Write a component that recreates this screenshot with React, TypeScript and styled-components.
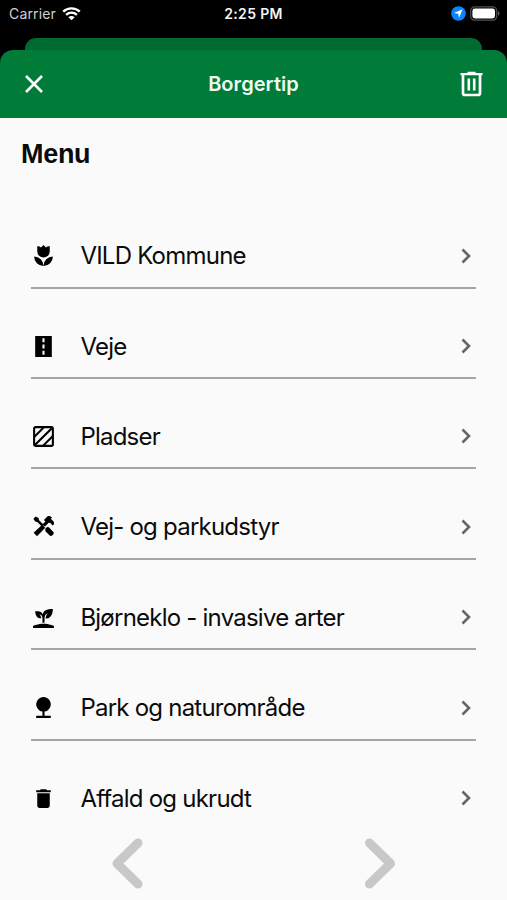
import React from "react";
import styled, { createGlobalStyle } from "styled-components";

const GlobalStyle = createGlobalStyle`
  * { box-sizing: border-box; }
  body { margin: 0; background: #000; font-family: Inter, "Liberation Sans", sans-serif; }
`;

const Screen = styled.div`
  width: 507px;
  height: 900px;
  overflow: hidden;
  display: flex;
  flex-direction: column;
  background: #000;
`;

const StatusBar = styled.div`
  flex: none;
  height: 38px;
  padding: 0 7px 11px 9px;
  display: grid;
  grid-template-columns: 1fr auto 1fr;
  align-items: center;
  color: #f4f4f4;
  font-size: 14px;
`;

const StatusGroup = styled.div<{ $end?: boolean }>`
  display: flex;
  align-items: center;
  justify-content: ${(p) => (p.$end ? "flex-end" : "flex-start")};
  gap: ${(p) => (p.$end ? 4 : 6)}px;
`;

const Carrier = styled.span`
  color: #d0d0d0;
  letter-spacing: 0.15px;
`;

const Clock = styled.span`
  margin-right: 2px;
  font-weight: 600;
  font-size: 14px;
  letter-spacing: 0.36px;
`;

const BackSheet = styled.div`
  flex: none;
  height: 12px;
  margin: 0 25px;
  border-radius: 11px 11px 0 0;
  background: #006b30;
`;

const Header = styled.header`
  flex: none;
  height: 68px;
  padding: 0 24px;
  display: grid;
  grid-template-columns: 1fr auto 1fr;
  align-items: center;
  border-radius: 13px 13px 0 0;
  background: #007b38;
  color: #fff;
`;

const IconButton = styled.button<{ $end?: boolean }>`
  display: flex;
  padding: 0;
  border: 0;
  background: none;
  color: inherit;
  justify-self: ${(p) => (p.$end ? "end" : "start")};
`;

const Title = styled.h1`
  margin: 0;
  font-size: 20px;
  font-weight: 600;
  line-height: 24px;
  letter-spacing: 0.05px;
  color: #eefaf2;
`;

const Content = styled.main`
  flex: 1;
  display: flex;
  flex-direction: column;
  background: #fafafa;
  color: #0b0b0b;
`;

const Heading = styled.h2`
  margin: 20px 0 0 21px;
  height: 32px;
  font-family: "Liberation Sans", sans-serif;
  font-size: 27px;
  line-height: 32px;
  font-weight: 700;
  letter-spacing: -0.3px;
`;

const List = styled.ul`
  list-style: none;
  margin: 28.3px 31px 0;
  padding: 0;
`;

const Row = styled.li`
  height: 90.4px;
  display: flex;
  align-items: flex-end;
  border-bottom: 2px solid #a5a5a5;
  &:last-child { border-bottom-color: transparent; }
`;

const RowInner = styled.div`
  flex: 1;
  height: 62px;
  display: flex;
  align-items: center;
`;

const Label = styled.span`
  flex: 1;
  margin-left: 24.4px;
  padding-top: 1px;
  font-size: 24px;
  line-height: 32px;
  letter-spacing: -0.77px;
  white-space: nowrap;
`;

const Pager = styled.nav`
  display: flex;
  justify-content: space-between;
  margin: 4.7px 110px 0;
`;

const Glyph = ({ children }: { children: React.ReactNode }) => (
  <svg width="25" height="25" viewBox="0 0 24 24" fill="#000">
    {children}
  </svg>
);

const rows = [
  {
    label: "VILD Kommune",
    icon: (
      <path d="M3 13a9 9 0 0 0 9 9 9 9 0 0 0-9-9m9 9a9 9 0 0 0 9-9 9 9 0 0 0-9 9m6-19v5a6 6 0 0 1-12 0V3c.74 0 1.47.12 2.16.39.55.23 1.04.57 1.45 1L12 2l2.39 2.39c.41-.43.9-.77 1.45-1C16.53 3.12 17.26 3 18 3Z" />
    ),
  },
  {
    label: "Veje",
    icon: <path d="M11 16h2v4h-2m0-10h2v4h-2m0-10h2v4h-2M4 22h16V2H4Z" />,
  },
  {
    label: "Pladser",
    icon: (
      <g fill="none" stroke="#000" strokeWidth="2">
        <rect x="3" y="3" width="18" height="18" rx="1.6" />
        <path d="M3 12.5 12.5 3M3.5 20.5l17-17M11.5 21l9.5-9.5" />
      </g>
    ),
  },
  {
    label: "Vej- og parkudstyr",
    icon: (
      <>
        <path d="m2.3 4.5 2.2-2.2 2.7 1.5.5 2.1 4.4 4.4-1.7 1.7L6 7.6l-2-.5ZM13.7 14.2l1.8-1.8 1.6.4 4.4 4.4c1.5 1.5-1.9 5-3.5 3.5l-4.2-4.2Z" />
        <path d="m2.5 18 8.3-7.8 2.9 2.9-7.9 8.2Z" />
        <path d="m10.6 10.3 3.2-3.2-1.4-1.4 3.8-3.8c1.5-.3 3 .4 4 1.4l-1.2 1.2 2.9 2.9.2 2.5-1.4 1.2-2.1-2.5-1.6-.1-3.6 3.6Z" />
      </>
    ),
  },
  {
    label: "Bjørneklo - invasive arter",
    icon: (
      <path d="M2 22v-2s5-2 10-2 10 2 10 2v2H2m9.3-12.9C10.1 5.2 4 6.1 4 6.1s.2 7.8 5.9 6.6C9.5 9.8 8 9 8 9c2.8 0 3 3.4 3 3.4V17h2v-4.2s0-3.9 3-4.9c0 0-2 3-2 5C21 13.6 21 4 21 4s-8.9-1-9.7 5.1Z" />
    ),
  },
  {
    label: "Park og naturområde",
    icon: <path d="M11 15.9a7 7 0 1 1 2 0V20h6v2H5v-2h6Z" />,
  },
  {
    label: "Affald og ukrudt",
    icon: (
      <path d="M19 4h-3.5l-1-1h-5l-1 1H5v2h14M6 19a2 2 0 0 0 2 2h8a2 2 0 0 0 2-2V7H6Z" />
    ),
  },
];

const pagerArrows = ["m28 7-21 20.5 21 20.5", "m7.5 7 21 20.5-21 20.5"];

export default function App() {
  return (
    <Screen>
      <GlobalStyle />
      <StatusBar>
        <StatusGroup>
          <Carrier>Carrier</Carrier>
          <svg width="19" height="14" viewBox="0 0 19 14" fill="none" stroke="#fff">
            <path d="M1.2 4.7c4.7-4.5 11.9-4.5 16.6 0M4.1 7.8c3.1-2.9 7.7-2.9 10.8 0" strokeWidth="2.3" />
            <path d="M6.4 10.2c1.8-1.6 4.4-1.6 6.2 0L9.5 13.3Z" fill="#fff" stroke="none" />
          </svg>
        </StatusGroup>
        <Clock>2:25 PM</Clock>
        <StatusGroup $end>
          <svg width="15" height="15" viewBox="0 0 15 15">
            <circle cx="7.5" cy="7.5" r="7.3" fill="#0a84ff" />
            <path d="M11.6 3.3 2.9 7l4.3.8.8 4.3Z" fill="#fff" />
          </svg>
          <svg width="30" height="15" viewBox="0 0 30 15">
            <rect x=".7" y=".8" width="26" height="13.4" rx="4" fill="none" stroke="#515151" strokeWidth="1.2" />
            <rect x="2.4" y="2.5" width="22.6" height="10" rx="2.4" fill="#fff" />
            <path d="M28 5.3c1.9.7 1.9 3.7 0 4.4Z" fill="#666" />
          </svg>
        </StatusGroup>
      </StatusBar>
      <BackSheet />
      <Header>
        <IconButton aria-label="Close">
          <svg width="20" height="20" viewBox="0 0 20 20" fill="none" stroke="#fff" strokeWidth="2.6">
            <path d="m2 2 16 16M18 2 2 18" />
          </svg>
        </IconButton>
        <Title>Borgertip</Title>
        <IconButton $end aria-label="Delete">
          <svg width="23" height="26" viewBox="0 0 23 26" fill="none" stroke="#fff">
            <path d="M.5 3.2h22M7.5 1.8h8" strokeWidth="2.2" />
            <path d="M3 3v19q0 2 2 2h13q2 0 2-2V3" strokeWidth="2.7" />
            <path d="M8.8 7.6v12M14.2 7.6v12" strokeWidth="2.6" />
          </svg>
        </IconButton>
      </Header>
      <Content>
        <Heading>Menu</Heading>
        <List>
          {rows.map((r) => (
            <Row key={r.label}>
              <RowInner>
                <Glyph>{r.icon}</Glyph>
                <Label>{r.label}</Label>
                <svg width="20" height="16" viewBox="0 0 20 16" fill="none" stroke="#666" strokeWidth="2.6">
                  <path d="m6.5 1.5 6.5 6.5-6.5 6.5" />
                </svg>
              </RowInner>
            </Row>
          ))}
        </List>
        <Pager>
          {pagerArrows.map((d) => (
            <svg key={d} width="35" height="55" viewBox="0 0 35 55" fill="none" stroke="#c8c8c8" strokeWidth="9" strokeLinecap="round" strokeLinejoin="round">
              <path d={d} />
            </svg>
          ))}
        </Pager>
      </Content>
    </Screen>
  );
}
